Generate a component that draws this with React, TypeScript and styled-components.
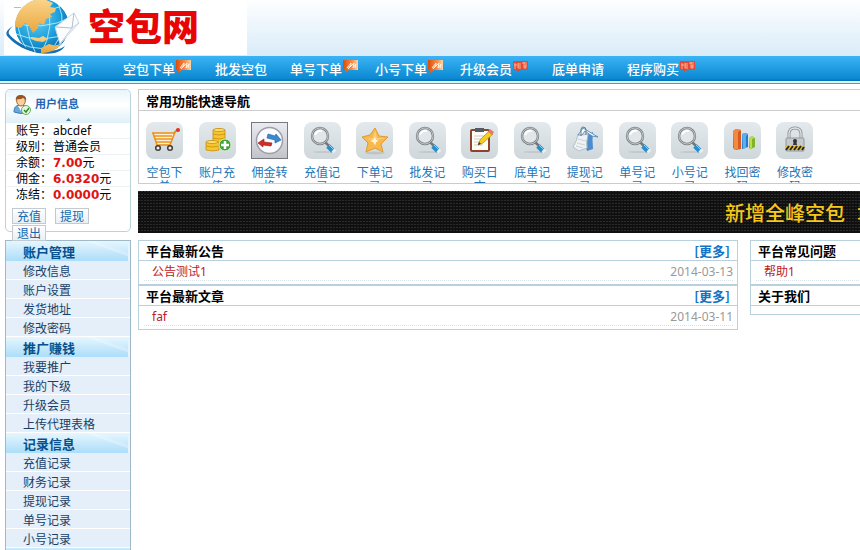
import React from "react";
import styled, { createGlobalStyle, css } from "styled-components";

const Global = createGlobalStyle`
  * { box-sizing: border-box; }
  body {
    margin: 0;
    overflow: hidden;
    background: #fff;
    font: 12px/16px "Noto Sans", "Noto Sans CJK SC", sans-serif;
    color: #000;
  }
  a { color: inherit; text-decoration: none; }
  ul, dl, dd, dt, h1, h2 { margin: 0; padding: 0; list-style: none; }
`;

const cjk = `"Noto Sans CJK SC", sans-serif`;

const Header = styled.header`
  height: 56px;
  padding-left: 4px;
  background: linear-gradient(#fdfeff, #d9ecf9);
`;

const Brand = styled.a`
  display: flex;
  align-items: center;
  gap: 8px;
  width: 243px;
  height: 55px;
  background: #fff;
`;

const BrandName = styled.h1`
  height: 55px;
  font: 900 37px/50px ${cjk};
  color: #e80505;
`;

const NavBar = styled.nav`
  display: flex;
  gap: 16px;
  height: 28px;
  padding-left: 57px;
  border-bottom: 1px solid #3f9fc6;
  background: linear-gradient(#3bb4f5, #0b88d1 23px, #0674b8 24px, #0674b8 25px, #d9f8fd 25px);
`;

const NavItem = styled.a<{ $plain?: boolean; $home?: boolean }>`
  display: flex;
  font: 500 13px/26px ${cjk};
  color: #fff;
  white-space: nowrap;
  ${(p) => p.$plain && css`padding: 0 7px;`}
  ${(p) => p.$home && css`padding-right: 24px;`}
  svg { margin-top: 4px; }
`;

const Page = styled.div`
  display: grid;
  grid-template-columns: 126px minmax(760px, 1fr);
  gap: 7px;
  padding: 5px 0 0 5px;
  align-items: start;
`;

const UserCard = styled.section`
  height: 143px;
  border: 1px solid #b9d3df;
  border-radius: 5px;
  background: #fff;
`;

const UserHead = styled.header`
  display: flex;
  gap: 4px;
  align-items: center;
  height: 33px;
  padding: 0 7px 4px;
  background: linear-gradient(#e8f5fb, #fff 45%, #def0f8);
  border-radius: 5px 5px 0 0;
  h2 { font: 700 11px/14px ${cjk}; height: 18px; color: #2464b4; }
`;

const Caret = styled.svg`
  display: block;
  margin: -5px auto 0;
`;

const Facts = styled.dl`
  padding: 2px 0 0 10px;
`;

const Fact = styled.div`
  display: flex;
  height: 16px;
  line-height: 16px;
  margin-left: -9px;
  padding-left: 9px;
  border-bottom: 1px solid #edf2f5;
  dt { width: 37px; }
  &:last-child { border: 0; }
`;

const Amount = styled.b`
  font: 700 12px/16px "DejaVu Sans", sans-serif;
  color: #e31212;
`;

const Actions = styled.div`
  display: flex;
  flex-wrap: wrap;
  gap: 1px 9px;
  padding: 5px 20px 0 6px;
`;

const SmallButton = styled.button`
  position: relative;
  z-index: 1;
  width: 34px;
  height: 16px;
  padding: 0;
  border: 1px solid #c3cbd1;
  background: linear-gradient(#fff, #e9f0f4);
  font: 12px/14px ${cjk};
  color: #1468b0;
`;

const Menu = styled.nav`
  margin-top: 8px;
  border: 1px solid #9fb9c9;
  background: #e4effa;
`;

const MenuTitle = styled.h2`
  height: 20px;
  padding-left: 17px;
  font: 700 13px/21px ${cjk};
  color: #08508b;
  border-right: 2px solid #e4f4fe;
  background:
    linear-gradient(20deg, transparent 76%, #ffffff55 77%, transparent 84%),
    linear-gradient(#e6f6fe, #abddf9);
`;

const MenuItem = styled.li`
  height: 19px;
  padding-left: 17px;
  border-bottom: 1px solid #fff;
  font: 12px/20px ${cjk};
  color: #173f68;
`;

const MenuFoot = styled.div`
  height: 20px;
  background: linear-gradient(#c9eafb, #abddf9);
`;

const Quick = styled.section`
  border: 1px solid #ccc;
  h2 {
    padding-left: 7px;
    border-bottom: 1px solid #ccc;
    font: 700 13px/21px ${cjk};
    height: 21px;
  }
`;

const QuickGrid = styled.ul`
  display: grid;
  grid-template-columns: repeat(13, 1fr);
  max-width: 690px;
  height: 72px;
  padding: 11px 0 0 7px;
  overflow: hidden;
`;

const QuickLink = styled.a`
  display: block;
  width: 37px;
  font: 12px/14px ${cjk};
  text-align: center;
  color: #1b75b9;
`;

const Tile = styled.span<{ $square?: boolean }>`
  display: block;
  width: 37px;
  height: 37px;
  margin-bottom: 6px;
  border-radius: ${(p) => (p.$square ? 0 : 8)}px;
  border: ${(p) => (p.$square ? "1px solid #77797f" : "0")};
  background: linear-gradient(${(p) => (p.$square ? "#e9ebf0, #c2c4ca" : "#e3e9ec, #cfd7db")});
  svg { display: block; margin: ${(p) => (p.$square ? -1 : 0)}px; }
`;

const Banner = styled.div`
  height: 42px;
  margin: 7px 0;
  padding-left: 587px;
  overflow: hidden;
  white-space: pre;
  font: 500 20px/43px ${cjk};
  color: #f6c81c;
  background:
    repeating-linear-gradient(90deg, transparent 0 2px, #101010 2px 3px),
    repeating-linear-gradient(#2b2b2b 0 1px, #101010 1px 3px);
  span { margin-left: 12px; }
`;

const Columns = styled.div`
  display: grid;
  grid-template-columns: 600px 1fr;
  gap: 12px;
  align-items: start;
`;

const Panel = styled.section`
  border: 1px solid #b9d1de;
`;

const PanelHead = styled.header`
  display: flex;
  justify-content: space-between;
  height: 20px;
  padding: 0 7px;
  border-bottom: 1px solid #b9d1de;
  font: 700 13px/20px ${cjk};
  h2 { font: inherit; }
  a { color: #1273c4; }
`;

const PanelList = styled.ul`
  min-height: 8px;
  padding: 0 4px 3px 5px;
`;

const Entry = styled.li`
  display: flex;
  justify-content: space-between;
  height: 20px;
  padding-left: 8px;
  border-bottom: 1px dotted #dbe3e6;
  line-height: 22px;
  a { color: #c01820; }
  time { color: #999; }
`;

const Globe = () => (
  <svg width="76" height="55" viewBox="0 0 76 55" aria-hidden="true">
    <defs>
      <radialGradient id="sea" cx=".4" cy=".35" r=".7">
        <stop offset="0" stopColor="#6bd0f4" />
        <stop offset=".6" stopColor="#1b9fdc" />
        <stop offset="1" stopColor="#0965a9" />
      </radialGradient>
      <linearGradient id="land" x2="0" y2="1">
        <stop stopColor="#fbd489" />
        <stop offset="1" stopColor="#e7a43c" />
      </linearGradient>
      <clipPath id="ball"><circle cx="38" cy="26" r="27" /></clipPath>
    </defs>
    <path d="M9 26C1 31 1 34 5 38c6 7 18 13 29 15 13 2 23 0 27-7-7 5-17 6-27 4C21 47 9 40 5 34c-1-3 1-5 4-8Z" fill="#1470b4" />
    <g clipPath="url(#ball)">
      <circle cx="38" cy="26" r="27" fill="url(#sea)" />
      <g fill="none" stroke="#b7ebfb" strokeWidth=".9">
        <path d="M8 22q30 10 60-5M9 33q30 13 58-2M15 43q23 11 45 0M14 10q22 5 44-4" />
        <path d="M26 0q-9 26 6 54M42 0q10 26-5 54M15 5q-5 25 8 45M54 3q11 24-6 47" />
      </g>
      <path d="M10 10 20 1l20-2 9 4-3 4 6 1-1 4-5 2 2 3-6 2-2 6-5-2-1 5-5 5-4-7-4-3-4 5-5-1-1 8-5-6Z" fill="url(#land)" />
      <path d="m27 37 8 1 4-2 5 3-5 3-7-1-5-2ZM37 48l8-4 7 2 4-1-3 6-8 2-8 0Z" fill="url(#land)" />
    </g>
    <path d="M10 7h7v1h-7Z" fill="#bbb" />
    <path d="M51 27 70 13l5 10-19 21Z" fill="#fafcfd" stroke="#cbd8df" />
    <path d="M51 27 68 28l2-15M56 44l12-16 7-5" fill="none" stroke="#b3c0c9" />
    <path d="m68 28 7-5-19 21Z" fill="#e3e9ed" />
  </svg>
);

const UserIcon = () => (
  <svg width="18" height="20" viewBox="0 0 18 20" aria-hidden="true">
    <path d="M1 17c0-5 2-7 7-7s7 2 7 7q-7 3-14 0Z" fill="#69a9dc" stroke="#3a7cb5" />
    <path d="m5 11 3 5 3-5Z" fill="#fff" />
    <ellipse cx="8" cy="6" rx="4.300" ry="5" fill="#f8cf9e" stroke="#a96b33" />
    <path d="M3 6C2 1 5 0 8 0s6 2 5 6q-1-3-3-3-3 2-6 1Z" fill="#985523" />
    <circle cx="13" cy="15" r="4.500" fill="#e8f5e2" stroke="#6ca864" />
    <path d="m11 15 2 2 3-4" fill="none" stroke="#2d9029" strokeWidth="1.500" />
  </svg>
);

const HotBadge = () => (
  <svg width="17" height="13" viewBox="0 0 17 13" aria-hidden="true">
    <defs><linearGradient id="hot"><stop stopColor="#d94d08" /><stop offset=".6" stopColor="#f98b4a" /><stop offset="1" stopColor="#fbd7a8" /></linearGradient></defs>
    <path d="M1 0h15v10H7l-4 3v-3H1Z" fill="url(#hot)" />
    <path d="m5 8 4-5 0 2-3 4 6-6-1 5 3-4-1 4" fill="none" stroke="#fff3df" />
  </svg>
);

const PickBadge = () => (
  <svg width="17" height="13" viewBox="0 0 17 13" aria-hidden="true">
    <path d="M1 1h15v9H8l-2 2-2-2H1Z" fill="#e34a35" />
    <path d="M3 3v6M2 5h3M6 3v5M6 4h3M6 6h3M6 8h3M10 3h5M12 2v2M11 5h4M11 7h4M13 5v4" stroke="#ffc9a4" strokeWidth=".8" />
  </svg>
);

const Cart = () => (
  <>
    <path d="M7 12h20l-3 10H10Z" fill="#fff2d9" />
    <path d="m7 11 4 12h13l5-13M8 14h18M9 17h17M10 20h15M6 11h22" fill="none" stroke="#ee911b" strokeWidth="1.600" />
    <path d="m28 11 3-3" stroke="#ee911b" strokeWidth="2" />
    <circle cx="32" cy="8" r="2" fill="#df321f" />
    <g fill="#eee" stroke="#403c39" strokeWidth="1.500"><circle cx="12" cy="26" r="2.300" /><circle cx="24" cy="26" r="2.300" /></g>
  </>
);

const Coins = () => (
  <>
    <g fill="#f6c62c" stroke="#c78e12" strokeWidth=".8">
      <path d="M14 8q6-3 12 0v12q-6 3-12 0Z" />
      <path d="M7 20q6-2 13 0v8q-6 2-13 0Z" />
      <path d="M14 12q6 2 12 0M14 16q6 2 12 0M7 24q6 2 13 0" fill="none" />
      <ellipse cx="20" cy="8" rx="6" ry="1.500" fill="#ffe16b" />
      <ellipse cx="13" cy="20" rx="6" ry="1.500" fill="#ffe16b" />
    </g>
    <circle cx="26" cy="23" r="6" fill="#3fa337" stroke="#d9edd4" />
    <path d="M26 19v8M22 23h8" stroke="#fff" strokeWidth="2.500" />
  </>
);

const Transfer = () => (
  <>
    <circle cx="18.500" cy="18.500" r="13" fill="#fafbfe" stroke="#9da0aa" strokeWidth="1.500" />
    <path d="m17 12 7 2 1-2 5 6-6 3v-3l-8-2Z" fill="#3889cf" stroke="#1d5c9b" strokeWidth=".6" />
    <path d="m21 21-8-1v-3l-6 4 5 4v-2l8 1Z" fill="#d42d25" stroke="#8c1613" strokeWidth=".6" />
  </>
);

const Magnifier = () => (
  <>
    <ellipse cx="20" cy="30" rx="11" ry="1" fill="#c1c9cd" />
    <path d="m21 20 4 4" stroke="#777" strokeWidth="2.500" />
    <path d="m24 24 5 5" stroke="#288dc8" strokeWidth="5" />
    <path d="m25 23 5 5" stroke="#8ad0ef" />
    <path d="m29 28 2 2" stroke="#e8edf0" strokeWidth="4" />
    <circle cx="16" cy="14" r="8" fill="#e1e6e8" stroke="#7b8184" strokeWidth="2.400" />
    <circle cx="16" cy="14" r="8" fill="none" stroke="#c5cbce" strokeWidth=".9" />
    <path d="M11 13q2-5 7-4" fill="none" stroke="#fff" strokeWidth="2" />
  </>
);

const Star = () => (
  <>
    <ellipse cx="19" cy="31" rx="10" ry="1.500" fill="#bdc5c9" />
    <path d="m19 6 4 8 9 1-7 7 2 8-8-4-9 4 2-9-6-6 8-2Z" fill="#f7b84c" stroke="#e09a31" strokeLinejoin="round" />
    <path d="m19 8 2 8 9 0-9 2-2 6-2-6-8-1 8-1Z" fill="#fbce78" />
    <path d="m19 15 1 3 3 1-3 1-1 3-2-3-3-1 3-1Z" fill="#fff5d8" />
  </>
);

const Notepad = () => (
  <>
    <rect x="9" y="7" width="20" height="23" rx="2" fill="#8c442d" />
    <path d="M11 9h16v19H11Z" fill="#fffdf8" />
    <path d="M14 6h9v4h-9Z" fill="#555b66" />
    <path d="M13 14h11M13 17h11M13 20h8M13 23h9" stroke="#cfcac5" />
    <path d="m17 23 2-5 9-9 4 3-10 9Z" fill="#f3cf22" stroke="#ad851a" strokeWidth=".7" />
    <path d="m27 10 2-3 4 3-2 3Z" fill="#e57975" /><path d="m17 23 1-3 2 2Z" fill="#333" />
  </>
);

const Clip = () => (
  <>
    <path d="m20 13 7-3q-1 8 0 17l-6 2q-3-7-1-16Z" fill="#4d8cca" />
    <path d="M12 12q5 2 10 0-2 9-1 14l-8 3-6-4q4-6 5-13Z" fill="#eef2f5" stroke="#b5bfc6" />
    <path d="m12 13 5-7 15 9-6-1-7-5-3 4Z" fill="#fcfdfe" stroke="#5f93bd" />
    <path d="M15 14V8q0-3 2-3 3 0 3 3v5" fill="none" stroke="#697b87" />
    <path d="m12 17 8 2M11 21l8 2M10 24l7 2" stroke="#cbd3d8" />
  </>
);

const Books = () => (
  <>
    <path d="m9 9 3-2 5 1v19l-5 1-3-2Z" fill="#d85a1e" /><path d="m9 9 3-2 5 1-3 2v17l-4 1Z" fill="#f28b42" />
    <path d="m18 12 3-1 3 1v13l-6 2Z" fill="#2479ca" /><path d="m18 12 3-1 3 1-2 2v12l-3 1Z" fill="#5daeed" />
    <path d="m25 16 3-2 3 2v9l-4 2-2-1Z" fill="#81b329" /><path d="m25 16 3-2 3 2-3 1v9l-2 1Z" fill="#b4dc54" />
  </>
);

const Padlock = () => (
  <>
    <path d="M13 17v-5q0-6 6-6t6 6v5" fill="none" stroke="#8b9093" strokeWidth="3" />
    <path d="M13 17v-5q0-6 6-6t6 6v5" fill="none" stroke="#e2e5e7" strokeWidth="1.300" />
    <rect x="10" y="16" width="18" height="13" rx="1" fill="#c5cacc" stroke="#92989b" />
    <path d="M10 24h18v4H10Z" fill="#efc425" />
    <path d="m10 28 3-4m1 4 3-4m1 4 3-4m1 4 3-4m1 4 2-3" stroke="#292724" strokeWidth="2" />
    <circle cx="19" cy="19" r="2" fill="#333" /><path d="M18 19h2l1 4h-4Z" fill="#333" />
  </>
);

const navItems: { label: string; badge?: "hot" | "pick" }[] = [
  { label: "首页" },
  { label: "空包下单", badge: "hot" },
  { label: "批发空包" },
  { label: "单号下单", badge: "hot" },
  { label: "小号下单", badge: "hot" },
  { label: "升级会员", badge: "pick" },
  { label: "底单申请" },
  { label: "程序购买", badge: "pick" },
];

const shortcuts: [string, () => React.JSX.Element][] = [
  ["空包下单", Cart],
  ["账户充值", Coins],
  ["佣金转换", Transfer],
  ["充值记录", Magnifier],
  ["下单记录", Star],
  ["批发记录", Magnifier],
  ["购买日志", Notepad],
  ["底单记录", Magnifier],
  ["提现记录", Clip],
  ["单号记录", Magnifier],
  ["小号记录", Magnifier],
  ["找回密码", Books],
  ["修改密码", Padlock],
];

const menu = [
  { title: "账户管理", items: ["修改信息", "账户设置", "发货地址", "修改密码"] },
  { title: "推广赚钱", items: ["我要推广", "我的下级", "升级会员", "上传代理表格"] },
  { title: "记录信息", items: ["充值记录", "财务记录", "提现记录", "单号记录", "小号记录"] },
];

type PanelProps = { title: string; more?: boolean; entry?: string; date?: string };

const NewsPanel = ({ title, more, entry, date }: PanelProps) => (
  <Panel>
    <PanelHead>
      <h2>{title}</h2>
      {more && <a href="#more">[更多]</a>}
    </PanelHead>
    <PanelList>
      {entry && (
        <Entry>
          <a href="#entry">{entry}</a>
          {date && <time>{date}</time>}
        </Entry>
      )}
    </PanelList>
  </Panel>
);

export default function App() {
  return (
    <>
      <Global />
      <Header>
        <Brand href="#home">
          <Globe />
          <BrandName>空包网</BrandName>
        </Brand>
      </Header>
      <NavBar>
        {navItems.map((n, i) => (
          <NavItem key={n.label} href="#nav" $home={i === 0} $plain={i > 0 && !n.badge}>
            {n.label}
            {n.badge === "hot" && <HotBadge />}
            {n.badge === "pick" && <PickBadge />}
          </NavItem>
        ))}
      </NavBar>
      <Page>
        <aside>
          <UserCard>
            <UserHead>
              <UserIcon />
              <h2>用户信息</h2>
            </UserHead>
            <Caret width="5" height="3" viewBox="0 0 5 3" aria-hidden="true">
              <path d="m0 3 2.500-3L5 3Z" fill="#397795" />
            </Caret>
            <Facts>
              <Fact><dt>账号：</dt><dd>abcdef</dd></Fact>
              <Fact><dt>级别：</dt><dd>普通会员</dd></Fact>
              <Fact><dt>余额：</dt><dd><Amount>7.00</Amount>元</dd></Fact>
              <Fact><dt>佣金：</dt><dd><Amount>6.0320</Amount>元</dd></Fact>
              <Fact><dt>冻结：</dt><dd><Amount>0.0000</Amount>元</dd></Fact>
            </Facts>
            <Actions>
              <SmallButton>充值</SmallButton>
              <SmallButton>提现</SmallButton>
              <SmallButton>退出</SmallButton>
            </Actions>
          </UserCard>
          <Menu>
            {menu.map((g) => (
              <section key={g.title}>
                <MenuTitle>{g.title}</MenuTitle>
                <ul>
                  {g.items.map((t) => (
                    <MenuItem key={t}><a href="#menu">{t}</a></MenuItem>
                  ))}
                </ul>
              </section>
            ))}
            <MenuFoot />
          </Menu>
        </aside>
        <main>
          <Quick>
            <h2>常用功能快速导航</h2>
            <QuickGrid>
              {shortcuts.map(([label, Icon]) => (
                <li key={label}>
                  <QuickLink href="#quick">
                    <Tile $square={Icon === Transfer}>
                      <svg width="37" height="37" viewBox="0 0 37 37" aria-hidden="true"><Icon /></svg>
                    </Tile>
                    {label}
                  </QuickLink>
                </li>
              ))}
            </QuickGrid>
          </Quick>
          <Banner>新增全峰空包<span>增</span></Banner>
          <Columns>
            <div>
              <NewsPanel title="平台最新公告" more entry="公告测试1" date="2014-03-13" />
              <NewsPanel title="平台最新文章" more entry="faf" date="2014-03-11" />
            </div>
            <div>
              <NewsPanel title="平台常见问题" entry="帮助1" />
              <NewsPanel title="关于我们" />
            </div>
          </Columns>
        </main>
      </Page>
    </>
  );
}
